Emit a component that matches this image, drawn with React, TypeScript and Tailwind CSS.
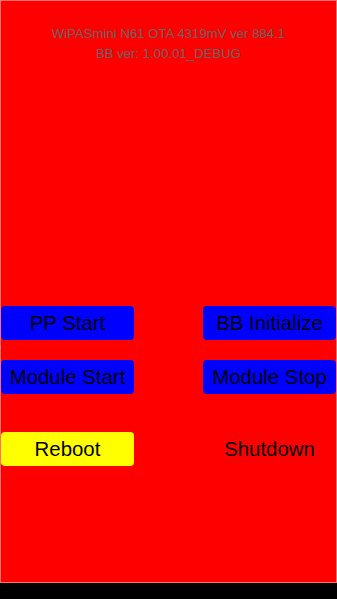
export default function App() {
  const font = { fontFamily: '"Liberation Sans", Arial, sans-serif' };

  return (
    <div className="w-[337px] h-[599px] bg-black overflow-hidden" style={font}>
      <div className="h-[583px] bg-[#ff0000] border border-[#ff7070] flex flex-col">
        {/* status lines */}
        <div className="pt-[23px] text-center text-[13.2px] leading-[20px] text-[#666666]">
          <p>WiPASmini N61 OTA 4319mV ver 884.1</p>
          <p>BB ver: 1.00.01_DEBUG</p>
        </div>

        {/* controls */}
        <div className="mt-[242px] flex flex-col text-[20.4px] text-black">
          <div className="flex justify-between">
            <button className="w-[133px] h-[34px] rounded-[4px] bg-[#0000ff]">PP Start</button>
            <button className="w-[133px] h-[34px] rounded-[4px] bg-[#0000ff]">BB Initialize</button>
          </div>
          <div className="mt-[20px] flex justify-between">
            <button className="w-[133px] h-[34px] rounded-[4px] bg-[#0000ff]">Module Start</button>
            <button className="w-[133px] h-[34px] rounded-[4px] bg-[#0000ff]">Module Stop</button>
          </div>
          <div className="mt-[38px] flex justify-between">
            <button className="w-[133px] h-[34px] rounded-[4px] bg-[#ffff00]">Reboot</button>
            <button className="w-[133px] h-[34px]">Shutdown</button>
          </div>
        </div>
      </div>
    </div>
  );
}
